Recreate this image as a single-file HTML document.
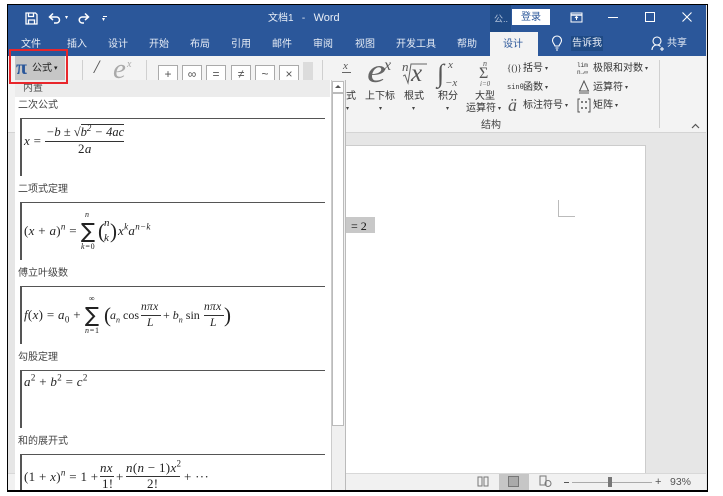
<!DOCTYPE html>
<html>
<head>
<meta charset="utf-8">
<style>
html,body{margin:0;padding:0;width:723px;height:496px;overflow:hidden;background:#fff}
body{position:relative;font-family:"Liberation Sans","Noto Sans CJK SC",sans-serif;font-size:10px;color:#333}
div,svg{position:absolute}
.t{position:absolute;white-space:nowrap;line-height:12px}
.w{color:#e6ecf5}
.m{position:absolute;white-space:nowrap;font-family:"Liberation Serif",serif;font-style:italic;font-size:13px;letter-spacing:.3px;color:#222;line-height:14px}
.m sup,.m sub{font-size:9px;line-height:0}
.r{font-style:normal}
.s{position:absolute;font-family:"DejaVu Sans",sans-serif;font-size:21px;line-height:22px;color:#222}
.b{position:absolute;left:20px;width:305px;border-top:1px solid #555;border-left:2px solid #555;box-sizing:border-box}
.l{position:absolute;left:18px;font-size:10px;color:#444;line-height:12px;white-space:nowrap}
.f{position:absolute;height:1px;background:#333}
.sym{position:absolute;top:65px;width:18px;height:18px;border:1px solid #aaa;background:#fff;text-align:center;font-size:12px;line-height:17px;color:#555}
.sep{position:absolute;width:1px;background:#d0d0d0}
.g{position:absolute;font-family:"Liberation Serif",serif;font-style:italic;color:#555;white-space:nowrap}
.d{position:absolute;white-space:nowrap;font-size:6px;line-height:10px;color:#444}
</style>
</head>
<body>
<!-- window frame -->
<div style="left:7px;top:4px;width:699px;height:486px;border:1px solid #000;background:#e6e6e6;overflow:hidden"></div>
<!-- title / tabs -->
<div style="left:8px;top:5px;width:698px;height:51px;background:#2b579a"></div>
<!-- ribbon -->
<div style="left:8px;top:56px;width:698px;height:76px;background:#f3f3f3;border-bottom:1px solid #d4d4d4"></div>
<!-- QAT -->
<svg style="left:25px;top:12px" width="13" height="13" viewBox="0 0 13 13" fill="none" stroke="#fff" stroke-width="1.300"><path d="M1 1h9.500L12 2.500V12H1z"/><path d="M3.500 1v3.500h5V1M3.500 12V8h6v4"/></svg>
<svg style="left:48px;top:12px" width="15" height="12" viewBox="0 0 15 12" fill="none" stroke="#fff" stroke-width="1.500"><path d="M2 5h6.500a3 3 0 0 1 0 6H6"/><path d="M5 1.500L1.500 5 5 8"/></svg>
<div class="d" style="left:65px;top:13px;color:#fff">▾</div>
<svg style="left:77px;top:12px" width="13" height="12" viewBox="0 0 13 12" fill="none" stroke="#fff" stroke-width="1.500"><path d="M11 5H5.500a3 3 0 0 0-.5 6H7"/><path d="M8 1.500L11.500 5 8 8"/></svg>
<div style="left:103px;top:16px;width:4px;height:1px;background:#fff"></div>
<div class="d" style="left:102px;top:15px;color:#fff">▾</div>
<div class="t" style="left:268px;top:12px;color:#e8eef7;font-size:10px">文档1 &nbsp;&nbsp;-&nbsp;&nbsp; <span style="font-size:11px">Word</span></div>
<!-- top right -->
<div style="left:490px;top:5px;width:21px;height:27px;background:#1f4a85"></div>
<div class="t" style="left:494px;top:13px;color:#b9c8de;font-size:9px">公..</div>
<div style="left:512px;top:9px;width:38px;height:16px;background:#fff"></div>
<div class="t" style="left:521px;top:12px;color:#2b579a;font-size:10px">登录</div>
<svg style="left:570px;top:12px" width="13" height="11" viewBox="0 0 13 11" fill="none" stroke="#fff"><rect x="1" y="1" width="11" height="9"/><path d="M1 3h11" stroke-width="1.500"/><path d="M6.500 8V5M5 6l1.500-1.500L8 6"/></svg>
<div style="left:608px;top:17px;width:10px;height:1px;background:#fff"></div>
<div style="left:645px;top:12px;width:8px;height:8px;border:1px solid #fff"></div>
<svg style="left:681px;top:11px" width="12" height="12" viewBox="0 0 12 12" stroke="#fff" stroke-width="1.100"><path d="M1.500 1.500l9 9M10.500 1.500l-9 9"/></svg>
<!-- tabs -->
<div class="t w" style="left:21px;top:39px">文件</div>
<div class="t w" style="left:67px;top:39px">插入</div>
<div class="t w" style="left:108px;top:39px">设计</div>
<div class="t w" style="left:149px;top:39px">开始</div>
<div class="t w" style="left:190px;top:39px">布局</div>
<div class="t w" style="left:231px;top:39px">引用</div>
<div class="t w" style="left:272px;top:39px">邮件</div>
<div class="t w" style="left:313px;top:39px">审阅</div>
<div class="t w" style="left:355px;top:39px">视图</div>
<div class="t w" style="left:396px;top:39px">开发工具</div>
<div class="t w" style="left:457px;top:39px">帮助</div>
<div style="left:490px;top:32px;width:48px;height:25px;background:#f3f3f3"></div>
<div class="t" style="left:503px;top:39px;color:#2b579a">设计</div>
<svg style="left:551px;top:35px" width="12" height="16" viewBox="0 0 12 16" fill="none" stroke="#fff" stroke-width="1.100"><path d="M4 11C3.500 9 1.500 8 1.500 5.500a4.500 4.500 0 0 1 9 0C10.500 8 8.500 9 8 11z"/><path d="M4.500 13h3M5 15h2"/></svg>
<div style="left:571px;top:36px;width:32px;height:15px;background:#1f4a85"></div>
<div class="t w" style="left:572px;top:38px">告诉我</div>
<svg style="left:651px;top:36px" width="14" height="16" viewBox="0 0 14 16" fill="none" stroke="#fff" stroke-width="1.100"><circle cx="6" cy="5" r="4"/><path d="M1 14c0-3 2-5 5-5 1.500 0 2.500.5 3.500 1.500M9 13h4M11 11v4"/></svg>
<div class="t w" style="left:667px;top:38px">共享</div>

<!-- equation button -->
<div style="left:15px;top:56px;width:50px;height:24px;background:#c6c6c6"></div>
<div class="t" style="left:16px;top:58px;font-family:'Liberation Serif',serif;font-size:20px;font-weight:bold;line-height:20px;color:#2b579a">π</div>
<div class="t" style="left:32px;top:63px;color:#222">公式</div>
<div class="d" style="left:54px;top:64px;font-size:7px;color:#222">▾</div>

<!-- gallery -->
<div class="sep" style="left:82px;top:60px;height:22px"></div>
<div class="g" style="left:94px;top:58px;font-size:19px;line-height:20px;color:#555">/</div>
<div class="g" style="left:113px;top:54px;font-size:29px;line-height:30px;color:#aaa">e</div>
<div class="g" style="left:127px;top:59px;font-size:10px;line-height:12px;color:#aaa">x</div>
<div class="sep" style="left:146px;top:60px;height:22px"></div>
<div class="sym" style="left:158px">+</div>
<div class="sym" style="left:182px">∞</div>
<div class="sym" style="left:206px">=</div>
<div class="sym" style="left:231px">≠</div>
<div class="sym" style="left:255px">~</div>
<div class="sym" style="left:279px">×</div>
<div style="left:303px;top:62px;width:10px;height:18px;background:#dcdcdc"></div>
<div class="sep" style="left:322px;top:60px;height:22px"></div>

<!-- structures -->
<div class="g" style="left:343px;top:60px;font-size:11px;line-height:12px">x</div>
<div style="left:342px;top:72px;width:9px;height:1px;background:#666"></div>
<div class="t" style="left:346px;top:91px">式</div>
<div class="d" style="left:346px;top:104px">▾</div>
<div class="g" style="left:367px;top:53px;font-size:34px;line-height:38px;font-weight:normal;transform:scaleX(1.250);transform-origin:left;color:#666">e</div>
<div class="g" style="left:384px;top:58px;font-size:16px;line-height:16px">x</div>
<div class="t" style="left:365px;top:91px">上下标</div>
<div class="d" style="left:379px;top:104px">▾</div>
<div class="g" style="left:402px;top:60px;font-size:13px;line-height:14px">n</div>
<svg style="left:403px;top:63px" width="24" height="22" viewBox="0 0 24 22" fill="none" stroke="#666"><path d="M0 13l2-1 3 8 3-19h16"/></svg>
<div class="g" style="left:411px;top:62px;font-size:25px;line-height:24px">x</div>
<div class="t" style="left:404px;top:91px">根式</div>
<div class="d" style="left:412px;top:104px">▾</div>
<div class="g" style="left:437px;top:60px;font-size:26px;line-height:28px;font-style:normal">∫</div>
<div class="g" style="left:448px;top:60px;font-size:11px;line-height:11px">x</div>
<div class="g" style="left:445px;top:78px;font-size:11px;line-height:11px">−x</div>
<div class="t" style="left:438px;top:91px">积分</div>
<div class="d" style="left:446px;top:104px">▾</div>
<div class="g" style="left:483px;top:60px;font-size:8px;line-height:8px">n</div>
<div class="g" style="left:479px;top:66px;font-size:16px;line-height:15px;font-style:normal">Σ</div>
<div class="g" style="left:480px;top:80px;font-size:7px;line-height:8px">i=0</div>
<div class="t" style="left:475px;top:91px">大型</div>
<div class="t" style="left:466px;top:103px">运算符</div>
<div class="d" style="left:498px;top:104px">▾</div>
<div class="t" style="left:481px;top:120px;color:#444">结构</div>

<div class="t" style="left:507px;top:62px;font-size:9px;font-family:'Liberation Serif',serif">{()}</div>
<div class="t" style="left:523px;top:63px">括号</div><div class="d" style="left:545px;top:64px">▾</div>
<div class="t" style="left:507px;top:82px;font-size:7px;font-family:'Liberation Mono',monospace">sinθ</div>
<div class="t" style="left:523px;top:82px">函数</div><div class="d" style="left:545px;top:83px">▾</div>
<div class="g" style="left:508px;top:96px;font-size:18px;line-height:18px">ä</div>
<div class="t" style="left:523px;top:100px">标注符号</div><div class="d" style="left:565px;top:101px">▾</div>
<div class="t" style="left:577px;top:62px;font-size:6px;line-height:7px;font-family:'Liberation Mono',monospace;color:#333">lim<br>n→∞</div>
<div class="t" style="left:593px;top:63px">极限和对数</div><div class="d" style="left:645px;top:64px">▾</div>
<svg style="left:578px;top:80px" width="12" height="14" viewBox="0 0 12 14" fill="none" stroke="#555"><path d="M6 1L1.500 11h9zM1 13h10"/></svg>
<div class="t" style="left:593px;top:82px">运算符</div><div class="d" style="left:625px;top:83px">▾</div>
<svg style="left:577px;top:98px" width="14" height="15" viewBox="0 0 14 15" fill="none" stroke="#555"><path d="M3 1H1v13h2M11 1h2v13h-2"/><path d="M5 3v2M9 3v2M5 9v2M9 9v2" stroke-width="1.500"/></svg>
<div class="t" style="left:593px;top:100px">矩阵</div><div class="d" style="left:615px;top:101px">▾</div>
<div class="sep" style="left:659px;top:60px;height:68px"></div>
<svg style="left:691px;top:123px" width="9" height="6" viewBox="0 0 9 6" fill="none" stroke="#555" stroke-width="1.200"><path d="M1 5l3.500-3.500L8 5"/></svg>

<!-- document -->
<div style="left:346px;top:145px;width:300px;height:328px;background:#fff;border-right:1px solid #ccc;border-top:1px solid #ccc;box-sizing:border-box"></div>
<div style="left:558px;top:200px;width:17px;height:17px;border-left:1px solid #bbb;border-bottom:1px solid #bbb;box-sizing:border-box"></div>
<div style="left:346px;top:217px;width:29px;height:16px;background:#c8c8c8"></div>
<div class="t" style="left:351px;top:220px;font-family:'Liberation Serif',serif;font-size:12px;color:#111">= 2</div>

<!-- status bar -->
<div style="left:8px;top:473px;width:698px;height:17px;background:#f1f1f1;border-top:1px solid #d8d8d8;box-sizing:border-box"></div>
<svg style="left:477px;top:476px" width="12" height="11" viewBox="0 0 12 11" fill="none" stroke="#777"><path d="M1 1h4v9H1zM7 1h4v9H7z"/></svg>
<div style="left:499px;top:474px;width:30px;height:16px;background:#c6c6c6"></div>
<div style="left:508px;top:476px;width:11px;height:11px;background:#aaa;border:1px solid #777;box-sizing:border-box"></div>
<svg style="left:539px;top:475px" width="13" height="12" viewBox="0 0 13 12" fill="none" stroke="#777"><path d="M1 1h6v9H1z"/><circle cx="9" cy="8.500" r="3"/></svg>
<div style="left:564px;top:482px;width:5px;height:1px;background:#555"></div>
<div style="left:572px;top:482px;width:80px;height:1px;background:#aaa"></div>
<div style="left:608px;top:477px;width:4px;height:10px;background:#777"></div>
<div class="t" style="left:655px;top:476px;font-size:11px;color:#555">+</div>
<div class="t" style="left:670px;top:476px;font-size:10.500px;color:#555">93%</div>

<!-- dropdown panel -->
<div style="left:15px;top:80px;width:331px;height:410px;background:#fff;border-right:1px solid #bbb;box-sizing:border-box;overflow:hidden"></div>
<div style="left:15px;top:80px;width:315px;height:17px;background:#ececec"></div>
<div class="t" style="left:23px;top:83px;color:#555">内置</div>
<!-- scrollbar -->
<div style="left:331px;top:80px;width:14px;height:410px;background:#f0f0f0;border-left:1px solid #ccc;box-sizing:border-box"></div>
<div style="left:332px;top:81px;width:12px;height:12px;background:#fff;border:1px solid #bbb;box-sizing:border-box"></div>
<div style="left:335px;top:85px;width:0;height:0;border-left:3px solid transparent;border-right:3px solid transparent;border-bottom:3px solid #555"></div>
<div style="left:332px;top:93px;width:12px;height:333px;background:#fff;border:1px solid #bbb;box-sizing:border-box"></div>

<div class="l" style="top:100px">二次公式</div>
<div class="b" style="top:118px;height:58px"></div>
<div class="l" style="top:184px">二项式定理</div>
<div class="b" style="top:202px;height:58px"></div>
<div class="l" style="top:268px">傅立叶级数</div>
<div class="b" style="top:286px;height:58px"></div>
<div class="l" style="top:352px">勾股定理</div>
<div class="b" style="top:370px;height:58px"></div>
<div class="l" style="top:436px">和的展开式</div>
<div class="b" style="top:454px;height:36px"></div>

<!-- eq 1 -->
<div class="m" style="left:24px;top:134px">x <span class="r">=</span></div>
<div class="m" style="left:46px;top:125px;font-size:12.500px;letter-spacing:0">−b ± √<span style="border-top:1px solid #333">b<sup>2</sup> − 4ac</span></div>
<div class="f" style="left:45px;top:141px;width:79px"></div>
<div class="m" style="left:78px;top:142px"><span class="r">2</span>a</div>
<!-- eq 2 -->
<div class="m" style="left:24px;top:224px"><span class="r">(</span>x <span class="r">+</span> a<span class="r">)</span><sup>n</sup> <span class="r">=</span></div>
<div class="s" style="left:81px;top:220px">∑</div>
<div class="m" style="left:85px;top:210px;font-size:8px;line-height:9px">n</div>
<div class="m" style="left:81px;top:242px;font-size:8px;line-height:9px">k=<span class="r">0</span></div>
<div class="m r" style="left:98px;top:219px;font-size:21px;line-height:24px;font-weight:100">(</div>
<div class="m r" style="left:110px;top:219px;font-size:21px;line-height:24px;font-weight:100">)</div>
<div class="m" style="left:104px;top:216px;font-size:11px">n</div>
<div class="m" style="left:104px;top:231px;font-size:11px">k</div>
<div class="m" style="left:118px;top:224px">x<sup>k</sup>a<sup>n−k</sup></div>
<!-- eq 3 -->
<div class="m" style="left:24px;top:308px">f<span class="r">(</span>x<span class="r">) =</span> a<sub class="r">0</sub> <span class="r">+</span></div>
<div class="s" style="left:85px;top:304px">∑</div>
<div class="m r" style="left:89px;top:294px;font-size:8px;line-height:9px">∞</div>
<div class="m" style="left:85px;top:326px;font-size:8px;line-height:9px">n=<span class="r">1</span></div>
<div class="m r" style="left:104px;top:303px;font-size:21px;line-height:24px">(</div>
<div class="m" style="left:110px;top:308px;font-size:12px;letter-spacing:0">a<sub style="font-size:8px">n</sub> <span class="r">cos</span></div>
<div class="m" style="left:141px;top:300px;font-size:11.500px">nπx</div>
<div class="f" style="left:141px;top:315px;width:20px"></div>
<div class="m" style="left:147px;top:316px;font-size:11.500px">L</div>
<div class="m" style="left:163px;top:308px;font-size:12px;letter-spacing:0"><span class="r">+</span> b<sub style="font-size:8px">n</sub> <span class="r">sin</span></div>
<div class="m" style="left:204px;top:300px;font-size:11.500px">nπx</div>
<div class="f" style="left:204px;top:315px;width:20px"></div>
<div class="m" style="left:210px;top:316px;font-size:11.500px">L</div>
<div class="m r" style="left:224px;top:303px;font-size:21px;line-height:24px">)</div>
<!-- eq 4 -->
<div class="m" style="left:24px;top:375px">a<sup class="r">2</sup> <span class="r">+</span> b<sup class="r">2</sup> <span class="r">=</span> c<sup class="r">2</sup></div>
<!-- eq 5 -->
<div class="m" style="left:24px;top:470px"><span class="r">(1 +</span> x<span class="r">)</span><sup>n</sup> <span class="r">= 1 +</span></div>
<div class="m" style="left:100px;top:461px">nx</div>
<div class="f" style="left:100px;top:476px;width:14px"></div>
<div class="m r" style="left:102px;top:477px">1!</div>
<div class="m r" style="left:116px;top:470px">+</div>
<div class="m" style="left:126px;top:461px">n<span class="r">(</span>n <span class="r">− 1)</span>x<sup class="r">2</sup></div>
<div class="f" style="left:126px;top:476px;width:54px"></div>
<div class="m r" style="left:147px;top:477px">2!</div>
<div class="m r" style="left:184px;top:470px">+ ···</div>
<!-- red highlight on top of the panel -->
<div style="left:9px;top:49px;width:55px;height:31px;border:2px solid #e8262b"></div>
<!-- frame edge on top -->
<div style="left:7px;top:490px;width:700px;height:1px;background:#000"></div>
</body>
</html>
